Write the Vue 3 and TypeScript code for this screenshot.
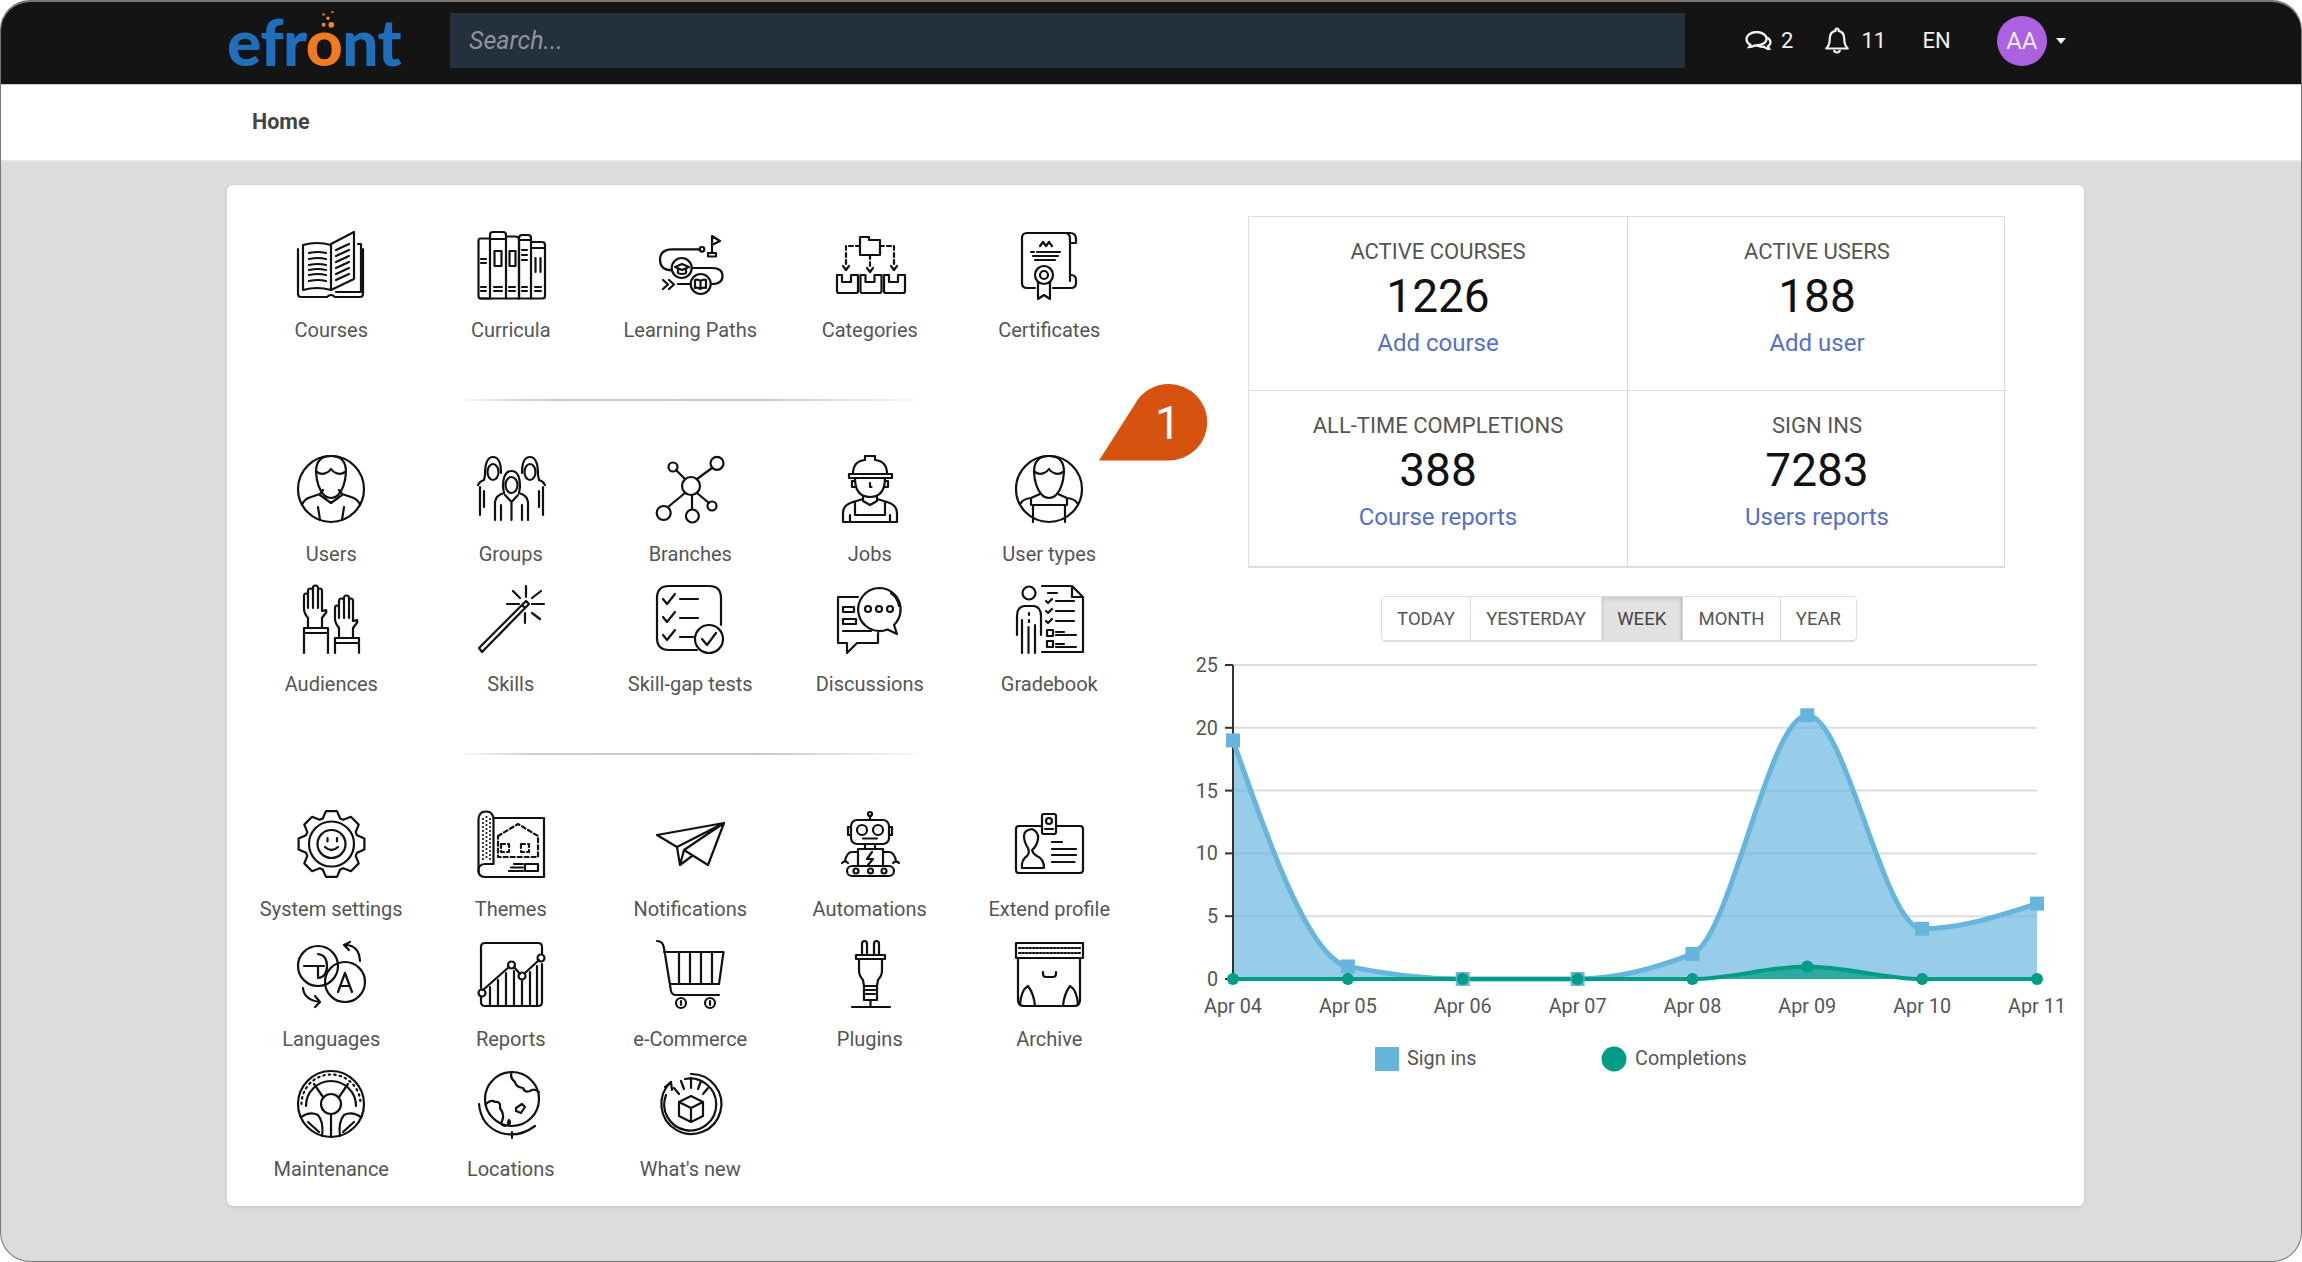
<script setup lang="ts">
const gear = (() => {
  const cx = 35.5, cy = 34, R = 33.4, r = 27, n = 8
  let d = ''
  for (let i = 0; i < n; i++) {
    const a = (i / n) * Math.PI * 2 - Math.PI / 2
    const w2 = 0.165, s = 0.33
    const pt = (rad: number, ang: number) => `${(cx + rad * Math.cos(ang)).toFixed(1)} ${(cy + rad * Math.sin(ang)).toFixed(1)}`
    d += `${i === 0 ? 'M' : 'L'}${pt(r, a - s)}L${pt(R, a - w2)}L${pt(R, a + w2)}L${pt(r, a + s)}`
  }
  return d + 'Z'
})()

const userHead = `<circle cx="35" cy="34" r="33"/><path d="M20 17q1 16 8 23 3 3 7 3t7-3q7-7 8-23 0-16-15-16T20 17z"/><path d="M21 17q4 3 9 1 3-1 5-4 2 3 5 4 5 2 9-1"/>`

const icons: Record<string, string> = {
  courses: `<path d="M2 18V63q0 3 3 3H31q2-2 4-2t4 2H64q3 0 3-3V18"/><path d="M7 59V14q14-4 28 0V59q-14-4-28 0z"/><path d="M35 13L58 1V48L35 59"/><path d="M62 13h3V61H40"/><path d="M13 22q9-2 17 0M13 28q9-2 17 0M13 34q9-2 17 0M13 39q9-2 17 0M13 44q9-2 17 0M13 50q9-2 17 0"/><path d="M40 19l13-6M40 25l13-6M40 31l13-6M40 37l13-6M40 43l13-6M40 49l13-6"/>`,
  curricula: `<path d="M14 67.5H5q-2.5 0-2.5-2.5V10q0-2.5 2.5-2.5h9"/><path d="M14 67.5V4q0-3 3-3h10q3 0 3 3V67.5"/><path d="M30 5.5h9q4 0 4 3V67.5"/><path d="M43 67.5V7q0-3 3-3h6q3 0 3 3V67.5"/><path d="M55 11h11q3 0 3 3V65q0 2.5-2.5 2.5H5"/><rect x="18.5" y="20" width="7" height="15"/><rect x="33.5" y="20" width="6" height="15"/><path d="M14 8h16M43 9h12M55 17h14"/><path d="M5 56h5M5 60h5M18 56h8M18 60h8M33 56h6M33 60h6M46 56h5M46 60h5M59 56h6M59 60h6M5 28h5M5 32h5M46 19h5M46 24h5M46 29h5M59.5 27V41M64.5 27V41"/>`,
  paths: `<circle cx="47" cy="18.3" r="2.3"/><path d="M44.7 18.3H17q-12 0-12 10.5t12 10.5"/><circle cx="26.7" cy="37" r="10"/><path d="M20 36l7-3 7 3-7 3zM23 38v4q4 2 8 0v-4"/><path d="M37 37H57q10.5 0 10.5 8t-10.5 8"/><circle cx="45.7" cy="53" r="10"/><path d="M40 49q3-1 5.5 1v8q-3-2-5.5-1zM45.5 50q3-2 5.5-1v8q-3-1-5.5 1"/><path d="M35.5 53H23M8 49l5 4.5-5 4.5M14 49l5 4.5-5 4.5M57 22V5l8 5-8 4M53 22h8v3.5h-8z"/>`,
  categories: `<path d="M25 6h9v3h11v15H25z"/><path stroke-dasharray="4 3" d="M25 15H11V36M45 15H59V36M35 24V38"/><path d="M8 35l3 4 3-4M32 37l3 4 3-4M56 35l3 4 3-4"/><path d="M2 44h5v7h9v-7h7v16q0 2-2 2H4q-2 0-2-2z"/><path transform="translate(23.5)" d="M2 44h5v7h9v-7h7v16q0 2-2 2H4q-2 0-2-2z"/><path transform="translate(47)" d="M2 44h5v7h9v-7h7v16q0 2-2 2H4q-2 0-2-2z"/>`,
  certificates: `<path d="M56 50V8q0-6-5-6H13q-5 0-5 5V52q0 5 5 5H21"/><path d="M51 2h5q6 0 6 6v4h-6"/><path d="M56 44h1q5 0 5 5v3q0 5-5 5H39"/><path d="M26 15l3-4 3 4 3-4 3 4"/><path d="M17 21h3M23 21h23M19 25h25M21 29h20"/><circle cx="30" cy="44" r="9"/><circle cx="30" cy="44" r="4"/><path d="M24 51V68l6-4 6 4V51"/>`,
  users: userHead + `<path d="M6 50q2-6 9-8l9-3 3-4M64 50q-2-6-9-8l-9-3-3-4M24 40l11 8 11-8M22 52l2 13M48 52l-2 13"/>`,
  groups: `<ellipse cx="17" cy="17" rx="5.5" ry="8"/><path d="M9 20q0-18 8-18t8 16M9 20l-1 5q-4 1-6 5M4 32V60M8 36V52"/><ellipse cx="54" cy="17" rx="5.5" ry="8"/><path d="M62 20q0-18-8-18t-8 16M62 20l1 5q4 1 6 5M67 32V60M63 36V52"/><ellipse cx="35.5" cy="30" rx="6" ry="8"/><path d="M27 32q0-16 8.5-16T44 32l-1 6M27 32l1 6M28 38q-8 2-9 9V65M43 38q8 2 9 9V65M29 40l6.5 7 6.5-7M25 50V65M46 50V65M35.5 47V65"/>`,
  branches: `<circle cx="36" cy="31" r="9"/><circle cx="62" cy="8.3" r="6.5"/><circle cx="18" cy="12" r="4.5"/><circle cx="8.7" cy="58" r="7"/><circle cx="37.4" cy="61" r="6.5"/><circle cx="57" cy="51" r="4.5"/><path d="M42 24L57 13M30 24L21 15M30 38L13 52M37 40V54M42 38L54 48"/>`,
  jobs: `<path d="M18 19q0-13 12-14V1h10v4q12 1 12 14"/><path d="M14 19h43v4H14z"/><path d="M20 23q0 19 15 19t15-19"/><path d="M19 26h-2v6h3.500M51 26h2v6h-3.500M35 28v4h1.500M28 41v5l7 4 7-4v-5M8 67V58q0-8 10-11l10-3M62 67V58q0-8-10-11l-10-3M8 67H62M20 47V60M50 47V60M20 60H50M15 60v7M55 60v7"/>`,
  usertypes: userHead + `<path d="M19 67V50h32V67M17 43v7M53 43v7M7 48q2-4 10-5l9-4M63 48q-2-4-10-5l-9-4"/>`,
  audiences: `<path d="M12 43V33Q8 28 8 24V11q0-2.500 2-2.500t2 2.500v12M12 23V6q0-2.500 2.500-2.500T17 6v17M17 23V3q0-2.500 2.500-2.500T22 3v20M22 23V6q0-2.500 2-2.500t2 2.500V26l4-1q1 2-1 4l-3 4v10"/><path d="M8 43h24v5H8zM8 48V68M32 48V68"/><path d="M43 53V43Q39 38 39 34V23q0-2.500 2-2.500t2 2.500v10M43 33V16q0-2.500 2.500-2.500T48 16v17M48 33V13q0-2.500 2.500-2.500T53 13v20M53 33V16q0-2.500 2-2.500t2 2.500V36l4-1q1 2-1 4l-3 4v10"/><path d="M39 53h24v5H39zM39 58V68M63 58V68"/>`,
  skills: `<path d="M3 63L50 16l3 3L6 67zM46 20l3 3"/><path d="M50 1V12M56 19h12M31 19h12M37 6l7 7M65 6l-9 7M56 28l8 6M49 28V38"/>`,
  skillgap: `<path d="M42 65H14q-12 0-12-12V13q0-12 12-12H54q12 0 12 12V40"/><circle cx="54" cy="54" r="14"/><path d="M47 54l5 6 9-12M8 14l4 5 8-10M25 14h18M8 32l4 5 8-10M25 33h18M8 50l4 5 8-10M25 52h13"/>`,
  discussions: `<path d="M23 12H3V58H12V68L22 58H43V48"/><path d="M8 22h11v5H8zM8 34h13v5H8zM8 46h28"/><path d="M44.500 3a21.500 21.500 0 1 0 8 41.500L62 49l-3-9A21.500 21.500 0 0 0 44.500 3z" fill="#fff"/><circle cx="33" cy="24" r="3"/><circle cx="44" cy="24" r="3"/><circle cx="55" cy="24" r="3"/><path d="M56 8q7 5 8 13"/>`,
  gradebook: `<circle cx="15" cy="8" r="6.500"/><path d="M3 50V31q0-9 7-10h10q7 1 7 10V50M8 35V68M21 40V68M14.500 42V68M15 28v2M15 35v2"/><path d="M28 1H58l11 11V67H28M58 1V12H69"/><path d="M34 8h9M32 16l2 2 4-4M42 16h18M32 26l2 2 4-4M42 26h18M32 36l2 2 4-4M42 36h18M42 47h8M42 50h20M42 59h8M42 62h20"/><rect x="33" y="45" width="6" height="6"/><rect x="33" y="56" width="6" height="6"/>`,
  settings: `<path d="${gear}"/><circle cx="35.500" cy="34" r="22.500"/><circle cx="35.500" cy="34" r="14"/><path d="M31.500 28v3.500M41 28v3.500M29 37q6.500 6 13 0"/>`,
  themes: `<path d="M2.500 62V10q0-8.500 7.500-8.500t7.500 8.500V53"/><path d="M17.500 8H68V67H9q-6.500 0-6.500-6.500t7-6.500h8"/><path stroke-dasharray="0 4" stroke-linecap="round" d="M7 9V50M10.500 7V50M14 9V50"/><path stroke-dasharray="4 3" d="M22 26L42 14 62 26V47H22zM25 34h8v8h-8zM45 34h8v8h-8z"/><rect x="49" y="54" width="13" height="7"/><path d="M38 54h9M35 57.500h12M33 61h14"/>`,
  plane: `<path d="M2 25L69 13 53 55 29 40M2 25L22 37 25 55 37 46M22 37L69 13 29 40 25 55"/>`,
  automations: `<circle cx="35" cy="4" r="2"/><path d="M35 6V10"/><rect x="16" y="10" width="38" height="24" rx="6"/><circle cx="27" cy="20" r="5"/><circle cx="43" cy="20" r="5"/><path d="M28 28.500h14M16 17h-3v8h3M54 17h3v8h-3"/><rect x="23" y="39" width="25" height="17"/><path d="M30 34v5M40 34v5M37 42l-5 7h6l-5 6M23 42h-6q-5 0-7 9M48 42h6q5 0 7 9M7 53q3-3 6 0M58 53q3-3 6 0"/><rect x="12" y="56" width="47" height="10" rx="5"/><circle cx="21" cy="61" r="2.500"/><circle cx="35.500" cy="61" r="2.500"/><circle cx="49" cy="61" r="2.500"/>`,
  extend: `<path d="M28 16H5q-3 0-3 3V60q0 3 3 3H66q3 0 3-3V19q0-3-3-3H42"/><rect x="28" y="4" width="14" height="20" rx="2"/><circle cx="35" cy="11" r="3"/><path d="M31 19h8"/><path d="M10 26q0-6 8-7 7 3 6 10-1 7-6 11 1 4 5 6 7 3 7 12H8q-1-8 5-12 3-3 1-8-4-6-4-12z"/><path d="M38 32h10M38 39h24M38 45h24"/><path stroke-dasharray="2.500 1.500" d="M38 52h24"/>`,
  languages: `<circle cx="22" cy="26" r="20"/><circle cx="49" cy="42" r="20"/><path d="M8 26h20M22 14q9 1 9 12t-9 12M22 26V38M42 52l7-19 7 19M44.500 46h9"/><path d="M54 2l-6 3 5 5M49 5q14 0 15 16M7 48q1 12 17 14M19 56l5 6-5 5"/>`,
  reports: `<path d="M5 48V7q0-4 4-4H62q4 0 4 4V14M66 24V62q0 4-4 4H9q-4 0-4-4V57"/><path d="M7 50L33 27M38 27L44 34M49 33L63 20"/><circle cx="6" cy="53" r="3.500"/><circle cx="35.500" cy="25" r="3.500"/><circle cx="46" cy="36" r="3.500"/><circle cx="65" cy="18" r="3.500"/><path d="M14 66V47M22 66V40M30 66V33M38 66V31M46 66V41M54 66V32M61 66V26"/>`,
  cart: `<path d="M2 1q6 0 7 7l7 43q1 4 5 4H64M9 12H68.500L64 44H15M24 12V44M35 12V44M46 12V44M57 12V44"/><circle cx="26" cy="63" r="5"/><circle cx="55" cy="63" r="5"/><path d="M26 61v4M55 61v4"/>`,
  plug: `<path d="M27 15V4q0-3 2.500-3T32 4V15M39 15V4q0-3 2.500-3T44 4V15"/><path d="M21 15H50V19H21z"/><path d="M24 19V30q0 6 4 10l1 6H42l1-6q4-4 4-10V19"/><rect x="29" y="46" width="13" height="14"/><path d="M31 50h9M31 54h9M35.500 60V67M17 67H55"/>`,
  archive: `<rect x="2" y="3" width="67" height="15"/><path stroke-dasharray="1.500 2" d="M5 8h61M5 13h61"/><path d="M4 18V60q0 6 6 6H60q6 0 6-6V18M29 32v2q0 3 3 3h7q3 0 3-3v-2M6 65q1-15 8-19q6 8 7 20M64 65q-1-15-8-19q-6 8-7 20"/>`,
  maintenance: `<circle cx="35" cy="34" r="33"/><circle cx="35" cy="34" r="10"/><path d="M10 36a25 25 0 0 1 50 0"/><path stroke-dasharray="1.500 4" d="M5.500 34a29.500 29.500 0 0 1 59 0"/><path d="M27 27L18 14M43 27L52 14M5 47q9-6 17-2 6 7 4 21M65 47q-9-6-17-2-6 7-4 21M35 44V67M12 52l11 10M58 52L47 62"/>`,
  locations: `<path d="M36 2A27 27 0 1 0 63 29 27 27 0 0 0 36 2"/><path d="M3 34q2 22 22 29 18 5 34-7M36 62v6"/><path d="M36 2q-3 5 3 10 1 5 8 6 2 5 7 3 4-3 9 1M10 34q5-5 9-2 6-1 5 6 5 7 2 13-2 4 3 5M40 38l6-4 3 3-4 6-5-2zM33 50q2 2 0 5q-2-2 0-5z"/>`,
  whatsnew: `<path d="M16 12A30 30 0 1 0 36 4"/><path d="M11 25A26 26 0 1 0 30 9"/><path d="M10 17l6-5 1 8M36 26l12 6v14l-12 6-12-6V32zM24 32l12 6 12-6M36 38v14M36 8v10M26 11l3 8M46 11l-3 8M19 18l5 6M53 18l-5 6"/>`,
}

const sections = [
  [
    ['Courses', 'courses'], ['Curricula', 'curricula'], ['Learning Paths', 'paths'], ['Categories', 'categories'], ['Certificates', 'certificates'],
  ],
  [
    ['Users', 'users'], ['Groups', 'groups'], ['Branches', 'branches'], ['Jobs', 'jobs'], ['User types', 'usertypes'],
    ['Audiences', 'audiences'], ['Skills', 'skills'], ['Skill-gap tests', 'skillgap'], ['Discussions', 'discussions'], ['Gradebook', 'gradebook'],
  ],
  [
    ['System settings', 'settings'], ['Themes', 'themes'], ['Notifications', 'plane'], ['Automations', 'automations'], ['Extend profile', 'extend'],
    ['Languages', 'languages'], ['Reports', 'reports'], ['e-Commerce', 'cart'], ['Plugins', 'plug'], ['Archive', 'archive'],
    ['Maintenance', 'maintenance'], ['Locations', 'locations'], ["What's new", 'whatsnew'],
  ],
]

const stats = [
  { title: 'ACTIVE COURSES', value: '1226', link: 'Add course' },
  { title: 'ACTIVE USERS', value: '188', link: 'Add user' },
  { title: 'ALL-TIME COMPLETIONS', value: '388', link: 'Course reports' },
  { title: 'SIGN INS', value: '7283', link: 'Users reports' },
]
const ranges = ['TODAY', 'YESTERDAY', 'WEEK', 'MONTH', 'YEAR']

const X0 = 1233, DX = 114.86, Y0 = 977, DY = 12.56
const days = ['Apr 04', 'Apr 05', 'Apr 06', 'Apr 07', 'Apr 08', 'Apr 09', 'Apr 10', 'Apr 11']
const xAt = (i: number) => X0 + DX * i
const yAt = (v: number) => Y0 - DY * v
const signIns = [19, 1, 0, 0, 2, 21, 4, 6]
const completions = [0, 0, 0, 0, 0, 1, 0, 0]

function curve(vals: number[]): string {
  const n = vals.length
  const s = vals.slice(1).map((v, i) => v - vals[i])
  const m: number[] = new Array(n).fill(0)
  for (let i = 1; i < n - 1; i++) {
    m[i] = s[i - 1] * s[i] <= 0 ? 0 : (2 * s[i - 1] * s[i]) / (s[i - 1] + s[i])
  }
  m[0] = (3 * s[0] - m[1]) / 2
  m[n - 1] = (3 * s[n - 2] - m[n - 2]) / 2
  let d = `M${xAt(0)} ${yAt(vals[0])}`
  for (let i = 0; i < n - 1; i++) {
    d += `C${(xAt(i) + DX / 3).toFixed(1)} ${yAt(vals[i] + m[i] / 3).toFixed(1)} ${(xAt(i + 1) - DX / 3).toFixed(1)} ${yAt(vals[i + 1] - m[i + 1] / 3).toFixed(1)} ${xAt(i + 1).toFixed(1)} ${yAt(vals[i + 1]).toFixed(1)}`
  }
  return d
}
const signLine = curve(signIns)
const compLine = curve(completions)
const close = `L${xAt(7)} ${Y0}L${X0} ${Y0}Z`
const ticks = [0, 5, 10, 15, 20, 25]
</script>

<template>
  <div class="frame">
    <header class="nav">
      <div class="logo">
        <span>efr</span><span class="logo-o">o</span><span>nt</span>
        <svg class="bubbles" viewBox="0 0 20 20" aria-hidden="true">
          <circle cx="13" cy="13.500" r="2.600" />
          <circle cx="6" cy="13.500" r="1.800" />
          <circle cx="10" cy="7.500" r="1.500" />
          <circle cx="6" cy="4" r="1.100" />
          <circle cx="14" cy="2" r="1" />
        </svg>
      </div>
      <div class="search">Search...</div>
      <div class="tools">
        <svg class="chat" viewBox="0 0 26 19" aria-hidden="true">
          <path d="M11 1C5.500 1 1 4.300 1 8.200c0 2.300 1.500 4.300 3.800 5.600L3.500 16c3 0 4.800-1 5.800-1.600.6.100 1.100.1 1.700.1 5.500 0 10-3 10-6.800S16.500 1 11 1z" />
          <path d="M21.500 6.500c2.200 1.200 3.500 3 3.500 4.800 0 1.700-.9 3-2.500 4l1.300 2.700c-2.500 0-4.300-1.200-5.300-2.200-3 .3-5.200-.3-6.800-1.400" />
        </svg>
        <span class="count count-chat">2</span>
        <svg class="bell" viewBox="0 0 24 27" aria-hidden="true">
          <path d="M12 1.500c-.9 0-1.600.7-1.600 1.600v.8C6.600 4.700 4.800 8 4.800 11.500c0 5-1.300 7.800-3.500 10h21.400c-2.200-2.200-3.500-5-3.500-10 0-3.500-1.800-6.800-5.600-7.600v-.8c0-.9-.7-1.600-1.600-1.600z" />
          <path d="M9 23c.4 1.600 1.500 2.500 3 2.500s2.600-.9 3-2.500" />
        </svg>
        <span class="count count-bell">11</span>
        <span class="lang">EN</span>
        <span class="avatar">AA</span>
        <span class="caret"></span>
      </div>
    </header>

    <nav class="crumb">Home</nav>

    <main class="page">
      <section class="card">
        <div class="menu">
          <template v-for="(sec, si) in sections" :key="si">
            <div class="grid">
              <a v-for="[label, key] in sec" :key="key" class="item">
                <svg class="ico" viewBox="0 0 70 70" aria-hidden="true" v-html="icons[key]"></svg>
                <span class="item-label">{{ label }}</span>
              </a>
            </div>
            <div v-if="si < 2" class="rule"></div>
          </template>
        </div>

        <div class="side">
          <div class="stats">
            <div v-for="s in stats" :key="s.title" class="stat">
              <div class="stat-title">{{ s.title }}</div>
              <div class="stat-value">{{ s.value }}</div>
              <a class="stat-link">{{ s.link }}</a>
            </div>
          </div>

          <div class="ranges">
            <button v-for="r in ranges" :key="r" class="range" :class="{ active: r === 'WEEK' }">{{ r }}</button>
          </div>

          <svg class="chart" viewBox="1170 650 920 450" aria-label="Sign ins and completions chart">
            <g v-for="t in ticks" :key="t">
              <line :x1="X0 - 8" :x2="X0" :y1="yAt(t)" :y2="yAt(t)" class="tick" />
              <line v-if="t > 0" :x1="X0" x2="2037" :y1="yAt(t)" :y2="yAt(t)" class="gridline" />
              <text :x="X0 - 15" :y="yAt(t) + 7" class="axis" text-anchor="end">{{ t }}</text>
            </g>
            <path :d="signLine + close" class="sign-fill" />
            <path :d="compLine + close" class="comp-fill" />
            <line :x1="X0" :x2="X0" y1="663" :y2="Y0" class="tick" />
            <path :d="signLine" class="sign-line" />
            <path :d="compLine" class="comp-line" />
            <rect v-for="(v, i) in signIns" :key="'s' + i" :x="xAt(i) - 7" :y="yAt(v) - 7" width="14" height="14" class="sign-pt" />
            <circle v-for="(v, i) in completions" :key="'c' + i" :cx="xAt(i)" :cy="yAt(v)" r="6" class="comp-pt" />
            <text v-for="(d, i) in days" :key="d" :x="xAt(i)" y="1011" class="axis" text-anchor="middle">{{ d }}</text>
            <rect x="1375" y="1045" width="24" height="24" class="sign-pt" />
            <text x="1407" y="1063" class="axis">Sign ins</text>
            <circle cx="1614" cy="1057" r="12.500" class="comp-pt" />
            <text x="1635" y="1063" class="axis">Completions</text>
          </svg>
        </div>

        <div class="badge">
          <svg viewBox="0 0 110 80" aria-hidden="true"><path d="M1 77.500L37 21A38.500 38.500 0 0 1 71 1a38 38 0 0 1 0 76.500z" /></svg>
          <span>1</span>
        </div>
      </section>
    </main>
  </div>
</template>

<style>
html, body { margin: 0; background: #fff; }
</style>

<style scoped>
* { box-sizing: border-box; }
.frame {
  position: relative;
  height: 1262px;
  border: 1px solid #777;
  border-top-width: 2px;
  border-radius: 30px;
  overflow: hidden;
  background: #dcdcdc;
  font-family: Roboto, "Liberation Sans", sans-serif;
  display: flex;
  flex-direction: column;
}
.nav {
  height: 82px;
  flex: none;
  background: #141414;
  display: flex;
  align-items: center;
  padding: 0 0 5px 226px;
  color: #f2f2f2;
}
.logo {
  position: relative;
  width: 223px;
  margin-top: 2px;
  font-family: Lato, sans-serif;
  font-weight: 900;
  font-size: 64px;
  line-height: 60px;
  letter-spacing: -0.5px;
  color: #1f6fbd;
  white-space: nowrap;
}
.logo-o { color: #f07a1f; }
.bubbles { position: absolute; left: 90px; top: -2px; width: 22px; height: 22px; fill: #f28a1c; }
.search {
  width: 1235px;
  height: 55px;
  background: #24303c;
  color: #8e9499;
  font-style: italic;
  font-size: 25px;
  line-height: 55px;
  padding-left: 19px;
}
.tools { display: flex; align-items: center; font-size: 22px; }
.chat { width: 27px; height: 19px; margin-left: 60px; fill: none; stroke: #f2f2f2; stroke-width: 2.300; }
.count-chat { margin-left: 9px; }
.bell { width: 24px; height: 27px; margin-left: 32px; fill: none; stroke: #f2f2f2; stroke-width: 2.200; stroke-linejoin: round; }
.count-bell { margin-left: 12px; }
.lang { margin-left: 36.500px; }
.avatar {
  width: 50px; height: 50px; margin-left: 46px;
  border-radius: 50%;
  background: #ac62e0;
  color: #f1e6fa;
  font-size: 24px;
  display: flex; align-items: center; justify-content: center;
}
.caret {
  margin-left: 9px;
  width: 0; height: 0;
  border-left: 5.500px solid transparent;
  border-right: 5.500px solid transparent;
  border-top: 6px solid #f2f2f2;
}
.crumb {
  height: 78px;
  flex: none;
  background: #fff;
  border-top: 1px solid #ccc;
  border-bottom: 2px solid #e6e6e6;
  padding-left: 251px;
  font-weight: 700;
  font-size: 21.500px;
  line-height: 74px;
  color: #444;
}
.page { flex: 1; padding: 23px 0 0 226px; }
.card {
  position: relative;
  display: flex;
  width: 1857px;
  height: 1021px;
  background: #fff;
  border-radius: 6px;
  box-shadow: 0 1px 3px rgba(120, 130, 170, .3);
}
.menu { width: 1021px; flex: none; padding: 46px 0 0 14.500px; }
.grid { display: grid; grid-template-columns: repeat(5, 179.500px); grid-auto-rows: 130px; }
.item { display: flex; flex-direction: column; align-items: center; }
.ico {
  display: block;
  width: 70px;
  height: 70px;
  overflow: visible;
  fill: none;
  stroke: #111;
  stroke-width: 2.200;
  stroke-linejoin: round;
  stroke-linecap: round;
}
.item-label { margin-top: 17px; font-size: 20px; line-height: 24px; color: #555; white-space: nowrap; }
.rule {
  width: 453px;
  height: 2px;
  margin: 38px 0 55px 222.500px;
  background: linear-gradient(90deg, rgba(190,190,190,.1), #cfcfcf 15%, #c8c8c8 65%, rgba(190,190,190,.1));
}
.rule:nth-of-type(2) { margin-bottom: 54px; }
.side { flex: 1; padding-top: 31px; min-width: 0; }
.stats {
  width: 757px;
  display: grid;
  grid-template-columns: 379px 378px;
  grid-template-rows: 174px 175px;
  border: 1px solid #ddd;
  border-bottom-width: 2px;
}
.stat { text-align: center; padding-top: 22px; }
.stat:nth-child(odd) { border-right: 1px solid #ddd; }
.stat:nth-child(-n+2) { border-bottom: 1px solid #ddd; }
.stat-title { font-size: 22px; line-height: 26px; color: #555; }
.stat-value { font-size: 46px; line-height: 54px; margin-top: 4px; color: #111; }
.stat-link { display: block; font-size: 24px; line-height: 28px; margin-top: 6px; color: #5570c8; }
.ranges {
  display: flex;
  width: 476px;
  height: 46px;
  margin: 28px 0 0 133px;
  border: 1px solid #ddd;
  border-bottom-width: 2px;
  border-radius: 5px;
  overflow: hidden;
}
.range {
  border: 0;
  background: #fff;
  border-left: 1px solid #ddd;
  padding: 0 15px;
  font: 400 18.500px Roboto, sans-serif;
  color: #555;
  flex: auto;
}
.range:first-child { border-left: 0; }
.range.active { background: #e2e2e2; box-shadow: inset 0 2px 4px rgba(0,0,0,.12); border-right: 1px solid #bbb; color: #444; }
.chart { display: block; width: 920px; height: 450px; margin: 9.500px 0 0 -78px; }
.tick { stroke: #333; stroke-width: 2; }
.gridline { stroke: #dcdcdc; stroke-width: 2; }
.axis { font-family: Roboto, sans-serif; font-size: 19.800px; fill: #555; }
.sign-fill { fill: rgba(102, 181, 221, .68); }
.comp-fill { fill: rgba(0, 156, 133, .72); }
.sign-line { fill: none; stroke: #66b5dd; stroke-width: 5; }
.comp-line { fill: none; stroke: #009c85; stroke-width: 4; }
.sign-pt { fill: #66b5dd; }
.comp-pt { fill: #009c85; }
.badge { position: absolute; left: 871px; top: 198px; width: 110px; height: 80px; }
.badge svg { display: block; width: 110px; height: 80px; fill: #d6530f; }
.badge span {
  position: absolute;
  left: 57px;
  top: 13px;
  color: #fff;
  font-size: 46px;
  line-height: 54px;
}
</style>
